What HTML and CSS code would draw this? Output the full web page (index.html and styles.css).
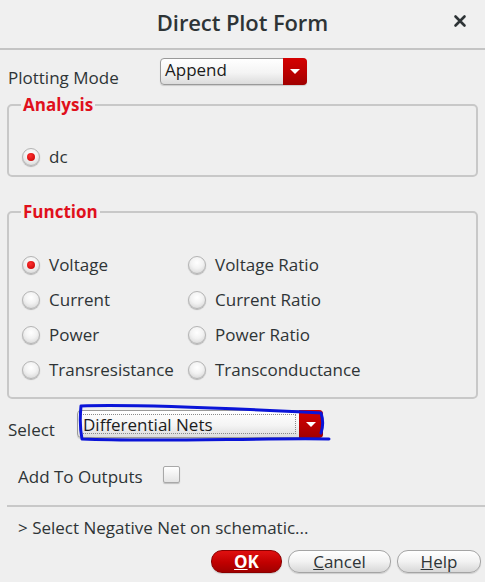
FILE: index.html
```html
<!DOCTYPE html>
<html lang="en">
<head>
<meta charset="utf-8">
<title>Direct Plot Form</title>
<link rel="stylesheet" href="styles.css">
</head>
<body>
<div class="dialog">
  <header class="titlebar">
    <h1 class="title">Direct Plot Form</h1>
    <svg class="close" width="14" height="14" viewBox="0 0 14 14" aria-label="Close">
      <path d="M2.5 2.5 L11.5 11.5 M11.5 2.5 L2.5 11.5" stroke="#2e3436" stroke-width="2.6" stroke-linecap="round"/>
    </svg>
  </header>

  <main class="content">
    <div class="row mode-row">
      <span class="label mode-label">Plotting Mode</span>
      <div class="combo combo-mode">
        <span class="combo-text">Append</span>
        <span class="combo-arrow"></span>
      </div>
    </div>

    <section class="group group-analysis">
      <span class="group-title">Analysis</span>
      <div class="radio-line analysis-line">
        <span class="radio checked"></span><span class="opt-text">dc</span>
      </div>
    </section>

    <section class="group group-function">
      <span class="group-title">Function</span>
      <div class="radio-grid">
        <div class="radio-line"><span class="radio checked"></span><span class="opt-text">Voltage</span></div>
        <div class="radio-line"><span class="radio"></span><span class="opt-text">Voltage Ratio</span></div>
        <div class="radio-line"><span class="radio"></span><span class="opt-text">Current</span></div>
        <div class="radio-line"><span class="radio"></span><span class="opt-text">Current Ratio</span></div>
        <div class="radio-line"><span class="radio"></span><span class="opt-text">Power</span></div>
        <div class="radio-line"><span class="radio"></span><span class="opt-text">Power Ratio</span></div>
        <div class="radio-line"><span class="radio"></span><span class="opt-text">Transresistance</span></div>
        <div class="radio-line"><span class="radio"></span><span class="opt-text">Transconductance</span></div>
      </div>
    </section>

    <div class="row select-row">
      <span class="label select-label">Select</span>
      <div class="combo combo-select">
        <span class="combo-text focus">Differential Nets</span>
        <span class="combo-arrow"></span>
        <svg class="scribble" width="262" height="46" viewBox="0 0 262 46">
          <path d="M7 5 C 60 3, 150 7, 247 12 C 249 18, 249 26, 247 32 M7 5 C 6 15, 6 28, 8 38 C 80 41, 180 37, 255 38" fill="none" stroke="#0a14d8" stroke-width="3" stroke-linecap="round" stroke-linejoin="round"/>
        </svg>
      </div>
    </div>

    <div class="row add-row">
      <span class="label add-label">Add To Outputs</span>
      <span class="checkbox"></span>
    </div>

    <div class="separator"></div>

    <p class="hint">&gt; Select Negative Net on schematic...</p>

    <div class="buttons">
      <button class="btn btn-ok"><u>O</u>K</button>
      <button class="btn btn-cancel"><u>C</u>ancel</button>
      <button class="btn btn-help"><u>H</u>elp</button>
    </div>
  </main>
</div>
</body>
</html>
```

FILE: styles.css
```css
* { box-sizing: border-box; }

html, body {
  margin: 0;
  padding: 0;
  background: #efefef;
}

body {
  font-family: "Open Sans", "Noto Sans", sans-serif;
  font-size: 17px;
  color: #2e3436;
  width: 485px;
  height: 582px;
  overflow: hidden;
}

.titlebar {
  height: 50px;
  display: flex;
  align-items: center;
  justify-content: center;
  position: relative;
  background: #f0f0f0;
  border-bottom: 2px solid #c4c4c4;
}

.title {
  margin: 0;
  font-size: 22px;
  font-weight: 600;
  color: #2e3436;
  padding-bottom: 5px;
  letter-spacing: -0.1px;
}

.close {
  position: absolute;
  left: 453px;
  top: 14px;
}

.content {
  padding: 0 7px;
}

.row {
  display: flex;
  align-items: flex-start;
}

.mode-row {
  margin-top: 8px;
  height: 46px;
}

.label {
  line-height: 22px;
}

.mode-label {
  width: 153px;
  padding-left: 1px;
  padding-top: 9px;
}

.combo {
  position: relative;
  display: flex;
  height: 27px;
  border: 1px solid #9a9a9a;
  border-radius: 4px;
  background: linear-gradient(#ffffff, #f4f4f4 55%, #dcdcdc);
  box-shadow: 0 1px 1px rgba(0,0,0,0.15);
}

.combo-mode {
  width: 147px;
}

.combo-text {
  flex: 1;
  padding-left: 4px;
  line-height: 22px;
  color: #1c1c1c;
}

.combo-arrow {
  width: 24px;
  margin: -1px -1px -1px 0;
  border-radius: 0 4px 4px 0;
  background: linear-gradient(#d40000, #b80000 60%, #a00000);
  display: flex;
  align-items: center;
  justify-content: center;
}

.combo-arrow::after {
  content: "";
  width: 0;
  height: 0;
  border-left: 5px solid transparent;
  border-right: 5px solid transparent;
  border-top: 5px solid #ffffff;
}

.group {
  border: 2px solid #c8c8c8;
  border-radius: 5px;
}

.group-title {
  display: block;
  width: fit-content;
  margin: -12px 0 0 12px;
  padding: 0 2px;
  background: #efefef;
  font-weight: 700;
  color: #e0101c;
  line-height: 22px;
}

.group-analysis {
  height: 73px;
}

.analysis-line {
  margin-top: 23px;
}

.radio-line {
  display: flex;
  align-items: center;
  height: 35px;
  padding-left: 13px;
}

.radio {
  width: 18px;
  height: 18px;
  border-radius: 50%;
  border: 1px solid #b4b4b4;
  background: radial-gradient(circle at 50% 35%, #ffffff 0%, #f2f2f2 45%, #cfcfcf 100%);
  box-shadow: 0 1px 1px rgba(0,0,0,0.25);
  position: relative;
  flex: none;
}

.radio.checked::after {
  content: "";
  position: absolute;
  left: 4px;
  top: 4px;
  width: 8px;
  height: 8px;
  border-radius: 50%;
  background: radial-gradient(circle at 40% 35%, #ff3030, #c00000);
}

.opt-text {
  margin-left: 9px;
  color: #2e3436;
}

.group-function {
  margin-top: 34px;
  height: 188px;
}

.radio-grid {
  display: grid;
  grid-template-columns: 166px 1fr;
  margin-top: 24px;
}

.select-row {
  margin-top: 11px;
  height: 28px;
}

.select-label {
  padding-left: 1px;
  padding-top: 9px;
  width: 70px;
}

.combo-select {
  width: 246px;
  height: 28px;
}

.combo-select .combo-text {
  padding-left: 2px;
}

.focus {
  margin: 3px 3px 3px 2px;
  border: 1px dotted #8a8a8a;
  line-height: 20px;
  padding-left: 0;
}

.scribble {
  position: absolute;
  left: -4px;
  top: -10px;
  pointer-events: none;
}

.add-row {
  align-items: center;
  height: 34px;
  margin-top: 22px;
}

.add-label {
  padding-left: 11px;
  width: 156px;
}

.checkbox {
  width: 17px;
  height: 17px;
  border: 1px solid #a8a8a8;
  border-radius: 2px;
  background: linear-gradient(#ffffff, #e4e4e4);
  box-shadow: 0 1px 1px rgba(0,0,0,0.2);
  margin-top: -6px;
}

.separator {
  margin-top: 11px;
  height: 2px;
  background: #c8c8c8;
  margin-right: -7px;
}

.hint {
  margin: 10px 0 0 11px;
  line-height: 22px;
}

.buttons {
  display: flex;
  justify-content: flex-end;
  gap: 6px;
  margin-top: 11px;
  margin-right: -3px;
}

.btn {
  font-family: "Open Sans", "Noto Sans", sans-serif;
  font-size: 17px;
  height: 23px;
  padding: 0;
  border-radius: 11px;
  border: 1px solid #a4a4a4;
  background: linear-gradient(#ffffff, #f2f2f2 50%, #d8d8d8);
  color: #2e3436;
  line-height: 20px;
  box-shadow: 0 1px 1px rgba(0,0,0,0.15);
}

.btn-ok {
  width: 71px;
  color: #ffffff;
  font-weight: 700;
  border-color: #8a0000;
  background: linear-gradient(#e01010, #c00000 55%, #a00000);
}

.btn-cancel {
  width: 103px;
}

.btn-help {
  width: 84px;
}
```
